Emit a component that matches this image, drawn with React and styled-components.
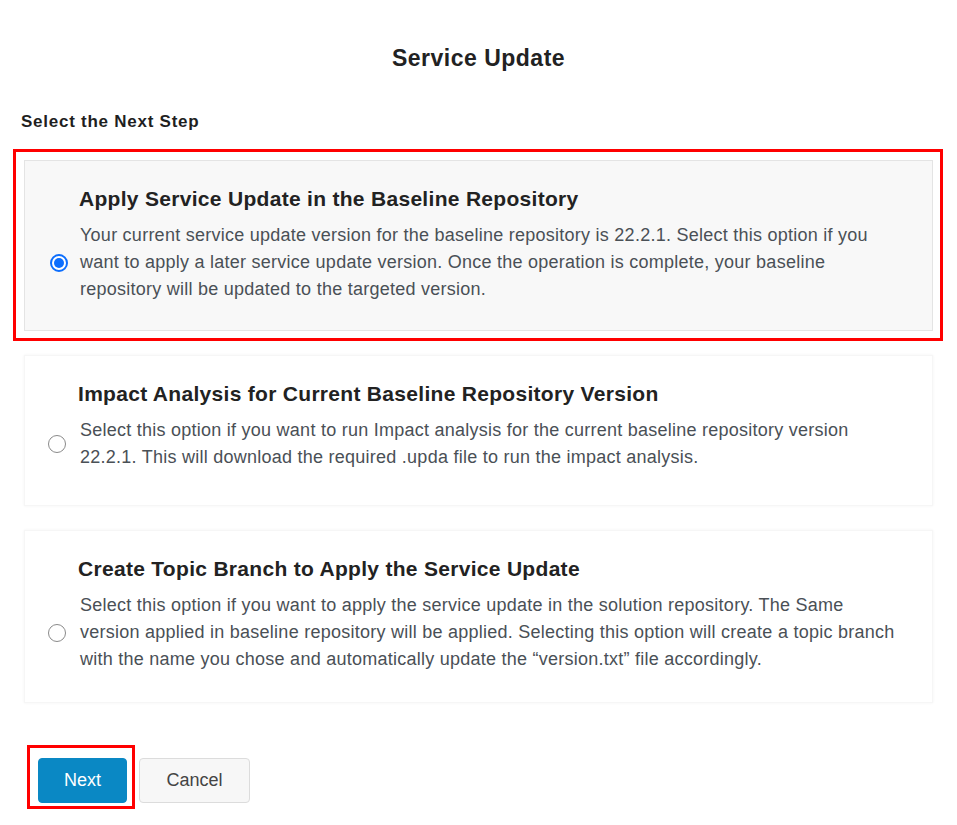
import React from "react";
import styled, { createGlobalStyle } from "styled-components";

const GlobalStyle = createGlobalStyle`
  html, body { margin: 0; padding: 0; background: #ffffff; }
  body { font-family: "Liberation Sans", Arial, sans-serif; color: #222; }
  * { box-sizing: border-box; }
`;

const Page = styled.div`
  width: 957px;
  padding: 44px 24px 40px 24px;
  display: flex;
  flex-direction: column;
`;

const Title = styled.h1`
  margin: 0;
  text-align: center;
  font-size: 23px;
  line-height: 28px;
  font-weight: 700;
  color: #222;
  letter-spacing: 0.5px;
`;

const SectionLabel = styled.h2`
  margin: 40px 0 0 -3px;
  font-size: 17px;
  line-height: 20px;
  font-weight: 700;
  color: #1f1f1f;
  letter-spacing: 0.75px;
`;

const OptionList = styled.div`
  margin-top: 28px;
  display: flex;
  flex-direction: column;
  gap: 24px;
`;

const Card = styled.label`
  position: relative;
  display: grid;
  grid-template-columns: 18px 1fr;
  column-gap: 12px;
  row-gap: 11px;
  min-height: 151px;
  padding: 25px 30px ${(p) => (p.$last ? "29px" : "27px")} 25px;
  background: ${(p) => (p.$selected ? "#f8f8f8" : "#ffffff")};
  border: 1px solid ${(p) => (p.$selected ? "#e4e4e4" : "#f6f6f6")};
  box-shadow: ${(p) => (p.$selected ? "none" : "0 0 3px rgba(0,0,0,0.05)")};
  cursor: pointer;
  align-content: start;
`;

const Highlight = styled.span`
  position: absolute;
  pointer-events: none;
  border: 3px solid #ff0000;
  top: ${(p) => p.$t}px;
  left: ${(p) => p.$l}px;
  right: ${(p) => p.$r}px;
  bottom: ${(p) => p.$b}px;
`;

const CardTitle = styled.div`
  grid-column: 2;
  font-size: 21px;
  line-height: 25px;
  font-weight: 700;
  color: #222;
  letter-spacing: 0.3px;
  margin-left: ${(p) => (p.$nudge ? "-1px" : "-2px")};
`;

const Radio = styled.span`
  grid-column: 1;
  grid-row: 2;
  align-self: center;
  width: 18px;
  height: 18px;
  border-radius: 50%;
  border: ${(p) => (p.$checked ? "2px solid #0d6efd" : "1.5px solid #8a8a8a")};
  background: #fff;
  position: relative;
  margin-left: ${(p) => (p.$checked ? "0px" : "-2px")};
  &::after {
    content: "";
    display: ${(p) => (p.$checked ? "block" : "none")};
    position: absolute;
    inset: 2px;
    border-radius: 50%;
    background: #0d6efd;
  }
`;

const CardText = styled.p`
  grid-column: 2;
  grid-row: 2;
  margin: 0;
  font-size: 18px;
  line-height: 27px;
  letter-spacing: 0.25px;
  color: #4a5056;
`;

const Actions = styled.div`
  margin-top: 55px;
  margin-left: 14px;
  display: flex;
  align-items: flex-start;
  gap: 12px;
`;

const ButtonWrap = styled.div`
  position: relative;
  display: flex;
`;

const Button = styled.button`
  height: 45px;
  width: ${(p) => (p.$primary ? "89px" : "111px")};
  padding: 0;
  font-family: "Liberation Sans", Arial, sans-serif;
  font-size: 18px;
  border-radius: 4px;
  cursor: pointer;
  background: ${(p) => (p.$primary ? "#0a88c4" : "#f7f7f7")};
  color: ${(p) => (p.$primary ? "#ffffff" : "#444")};
  border: 1px solid ${(p) => (p.$primary ? "#0a88c4" : "#dcdcdc")};
`;

const options = [
  {
    title: "Apply Service Update in the Baseline Repository",
    text:
      "Your current service update version for the baseline repository is 22.2.1. Select this option if you want to apply a later service update version. Once the operation is complete, your baseline repository will be updated to the targeted version.",
    selected: true,
  },
  {
    title: "Impact Analysis for Current Baseline Repository Version",
    text:
      "Select this option if you want to run Impact analysis for the current baseline repository version 22.2.1. This will download the required .upda file to run the impact analysis.",
  },
  {
    title: "Create Topic Branch to Apply the Service Update",
    text:
      "Select this option if you want to apply the service update in the solution repository. The Same version applied in baseline repository will be applied. Selecting this option will create a topic branch with the name you chose and automatically update the \u201Cversion.txt\u201D file accordingly.",
  },
];

export default function App() {
  return (
    <>
      <GlobalStyle />
      <Page>
        <Title>Service Update</Title>
        <SectionLabel>Select the Next Step</SectionLabel>
        <OptionList>
          {options.map((o, i) => (
            <Card key={o.title} $selected={o.selected} $last={i === options.length - 1}>
              <CardTitle $nudge={o.selected}>{o.title}</CardTitle>
              <Radio $checked={o.selected} />
              <CardText>{o.text}</CardText>
              {o.selected && <Highlight $t={-12} $l={-12} $r={-11} $b={-11} />}
            </Card>
          ))}
        </OptionList>
        <Actions>
          <ButtonWrap>
            <Button $primary>Next</Button>
            <Highlight $t={-13} $l={-11} $r={-8} $b={-6} />
          </ButtonWrap>
          <Button>Cancel</Button>
        </Actions>
      </Page>
    </>
  );
}
